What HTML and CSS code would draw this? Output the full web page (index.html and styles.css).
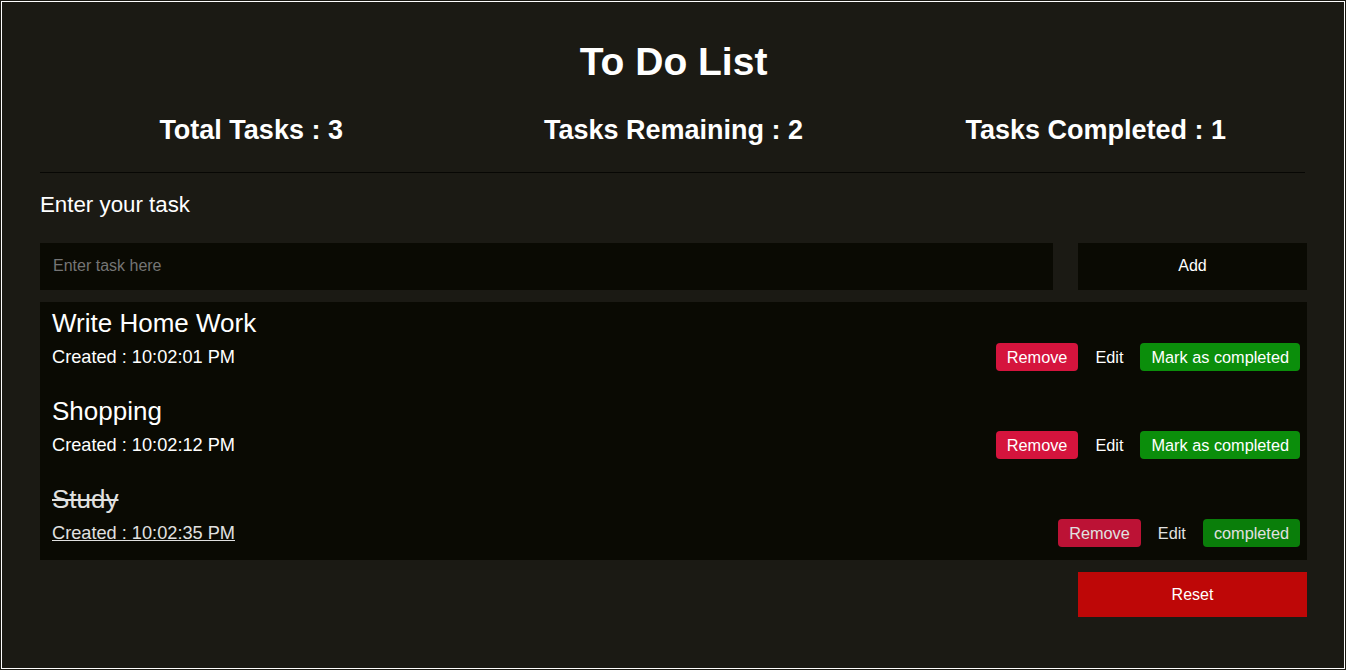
FILE: index.html
```html
<!DOCTYPE html>
<html lang="en">
<head>
<meta charset="utf-8">
<title>To Do List</title>
<link rel="stylesheet" href="styles.css">
</head>
<body>
<div class="app">
  <h1 class="title">To Do List</h1>
  <div class="stats">
    <div class="stat">Total Tasks : 3</div>
    <div class="stat">Tasks Remaining : 2</div>
    <div class="stat">Tasks Completed : 1</div>
  </div>
  <div class="divider"></div>
  <div class="label">Enter your task</div>
  <div class="entry">
    <input class="task-input" type="text" placeholder="Enter task here">
    <button class="add-btn">Add</button>
  </div>
  <div class="list">
    <div class="item">
      <div class="item-title">Write Home Work</div>
      <div class="item-row">
        <span class="created">Created : 10:02:01 PM</span>
        <div class="actions">
          <button class="btn btn-remove">Remove</button>
          <button class="btn btn-edit">Edit</button>
          <button class="btn btn-done">Mark as completed</button>
        </div>
      </div>
    </div>
    <div class="item">
      <div class="item-title">Shopping</div>
      <div class="item-row">
        <span class="created">Created : 10:02:12 PM</span>
        <div class="actions">
          <button class="btn btn-remove">Remove</button>
          <button class="btn btn-edit">Edit</button>
          <button class="btn btn-done">Mark as completed</button>
        </div>
      </div>
    </div>
    <div class="item item-completed">
      <div class="item-title">Study</div>
      <div class="item-row">
        <span class="created">Created : 10:02:35 PM</span>
        <div class="actions">
          <button class="btn btn-remove">Remove</button>
          <button class="btn btn-edit">Edit</button>
          <button class="btn btn-done">completed</button>
        </div>
      </div>
    </div>
  </div>
  <div class="footer">
    <button class="reset-btn">Reset</button>
  </div>
</div>
</body>
</html>
```

FILE: styles.css
```css
* { box-sizing: border-box; }

html, body {
  margin: 0;
  padding: 0;
  background: #1b1a14;
}

body {
  font-family: "Liberation Sans", Arial, sans-serif;
  color: #ffffff;
}

.app {
  margin: 1px;
  height: calc(100vh - 2px);
  border: 1px solid #ffffff;
  padding: 37px 37px 0 38px;
  display: flex;
  flex-direction: column;
}

.title {
  margin: 0;
  font-size: 39px;
  font-weight: bold;
  line-height: 45px;
  text-align: center;
}

.stats {
  margin-top: 31px;
  display: grid;
  grid-template-columns: 1fr 1fr 1fr;
}

.stat {
  font-size: 27px;
  font-weight: bold;
  line-height: 31px;
  text-align: center;
}

.divider {
  margin-top: 26px;
  height: 1px;
  background: #070704;
  margin-right: 2px;
}

.label {
  margin-top: 19px;
  font-size: 22.3px;
  line-height: 25px;
}

.entry {
  margin-top: 26px;
  display: flex;
  gap: 25px;
}

.task-input {
  flex: 1;
  height: 47px;
  border: none;
  outline: none;
  background: #0a0a03;
  color: #ffffff;
  font-family: "Liberation Sans", Arial, sans-serif;
  font-size: 16px;
  padding: 0 13px 1px;
}

.task-input::placeholder {
  color: #757575;
}

.add-btn {
  width: 229px;
  height: 47px;
  border: none;
  background: #0a0a03;
  color: #ffffff;
  font-family: "Liberation Sans", Arial, sans-serif;
  font-size: 16px;
  padding: 0 0 2px;
}

.list {
  margin-top: 12px;
  background: #0a0a03;
  padding: 6px 7px 13px 12px;
  display: flex;
  flex-direction: column;
  gap: 25px;
}

.item-title {
  font-size: 26px;
  line-height: 30px;
}

.item-row {
  margin-top: 5px;
  height: 28px;
  display: flex;
  align-items: center;
  justify-content: space-between;
}

.created {
  font-size: 18.2px;
  line-height: 21px;
}

.actions {
  display: flex;
  gap: 6px;
}

.btn {
  border: none;
  border-radius: 4px;
  height: 28px;
  padding: 0 11px;
  font-family: "Liberation Sans", Arial, sans-serif;
  font-size: 16.3px;
  color: #ffffff;
  background: transparent;
}

.btn-remove {
  background: #d5143d;
}

.btn-done {
  background: #0b8e0b;
}

.item-completed {
  opacity: 0.88;
}

.item-completed .item-title {
  text-decoration: line-through;
}

.item-completed .created {
  text-decoration: underline;
}

.footer {
  margin-top: 12px;
  display: flex;
  justify-content: flex-end;
}

.reset-btn {
  width: 229px;
  height: 45px;
  border: none;
  background: #be0707;
  color: #ffffff;
  font-family: "Liberation Sans", Arial, sans-serif;
  font-size: 16px;
}
```
